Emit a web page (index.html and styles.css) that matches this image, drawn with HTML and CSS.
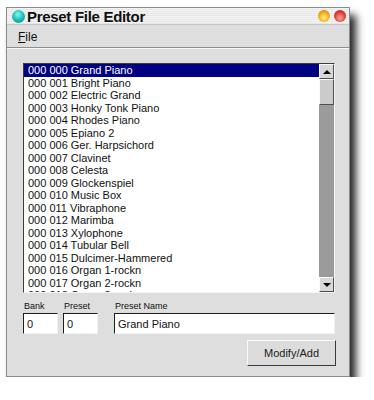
FILE: index.html
```html
<!DOCTYPE html>
<html lang="en">
<head>
    <meta charset="UTF-8">
    <meta name="viewport" content="width=device-width, initial-scale=1.0">
    <title>Preset File Editor</title>
    <link rel="stylesheet" href="styles.css">
</head>
<body>
    <div class="window">
        <!-- Title bar -->
        <div class="titlebar">
            <span class="dot teal"></span>
            <span class="title">Preset File Editor</span>
            <span class="spacer"></span>
            <span class="dot yellow"></span>
            <span class="dot red"></span>
        </div>

        <div class="menubar">
            <span class="menu"><u>F</u>ile</span>
        </div>

        <div class="content">
            <div class="listbox">
                <ul class="list">
                    <li class="selected">000 000 Grand Piano</li>
                    <li>000 001 Bright Piano</li>
                    <li>000 002 Electric Grand</li>
                    <li>000 003 Honky Tonk Piano</li>
                    <li>000 004 Rhodes Piano</li>
                    <li>000 005 Epiano 2</li>
                    <li>000 006 Ger. Harpsichord</li>
                    <li>000 007 Clavinet</li>
                    <li>000 008 Celesta</li>
                    <li>000 009 Glockenspiel</li>
                    <li>000 010 Music Box</li>
                    <li>000 011 Vibraphone</li>
                    <li>000 012 Marimba</li>
                    <li>000 013 Xylophone</li>
                    <li>000 014 Tubular Bell</li>
                    <li>000 015 Dulcimer-Hammered</li>
                    <li>000 016 Organ 1-rockn</li>
                    <li>000 017 Organ 2-rockn</li>
                    <li>000 018 Organ 3-rockn</li>
                </ul>
                <div class="scrollbar">
                    <div class="arrow up"></div>
                    <div class="track"><div class="thumb"></div></div>
                    <div class="arrow down"></div>
                </div>
            </div>

            <div class="fields">
                <label class="field">
                    <span>Bank</span>
                    <input type="text" value="0">
                </label>
                <label class="field">
                    <span>Preset</span>
                    <input type="text" value="0">
                </label>
                <label class="field name">
                    <span>Preset Name</span>
                    <input type="text" value="Grand Piano">
                </label>
            </div>

            <div class="actions">
                <button class="modify-btn">Modify/Add</button>
            </div>
        </div>
    </div>
</body>
</html>
```

FILE: styles.css
```css
/* Preset editor window */
* {
    box-sizing: border-box;
}

body {
    margin: 0;
    background: #fff;
    font-family: 'Liberation Sans', Arial, sans-serif;
    color: #111;
}

.window {
    width: 344px;
    height: 370px;
    margin: 7px 0 0 6px;
    border: 1px solid #8c8c8c;
    background: #dedede;
    display: flex;
    flex-direction: column;
    box-shadow: 6px 8px 8px rgba(0,0,0,0.85);
}

.titlebar {
    height: 17px;
    display: flex;
    align-items: center;
    padding: 0 3px 0 5px;
    background: repeating-linear-gradient(#f4f4f4 0 1px, #e7e7e7 1px 2px);
    border-bottom: 1px solid #c6c6c6;
}

.title {
    font-weight: bold;
    font-size: 15px;
    letter-spacing: -0.3px;
    margin-left: 2px;
    color: #111;
}

.spacer {
    flex: 1;
}

.dot {
    width: 12px;
    height: 12px;
    border-radius: 50%;
}

.dot.teal {
    width: 13px;
    height: 13px;
    background: radial-gradient(circle at 45% 35%, #8ff5ec 0, #1fc4c0 45%, #087a7c 100%);
}

.dot.yellow {
    margin-right: 4px;
    background: radial-gradient(circle at 50% 65%, #ffe98a 0, #f4b21a 50%, #b8760a 100%);
}

.dot.red {
    background: radial-gradient(circle at 50% 65%, #ffb0a8 0, #e8403a 50%, #9c1c18 100%);
}

.menubar {
    height: 23px;
    padding: 2px 11px 0;
    display: flex;
    align-items: center;
    border-bottom: 1px solid #8e8e8e;
    box-shadow: 0 1px 0 #f8f8f8;
}

.menu {
    font-size: 12px;
}

.content {
    flex: 1;
    padding: 15px 14px 0 16px;
}

/* List with scrollbar */
.listbox {
    height: 230px;
    display: flex;
    background: #fff;
    border: 1px solid;
    border-color: #3c3c3c #f4f4f4 #f4f4f4 #3c3c3c;
}

.list {
    flex: 1;
    margin: 0;
    padding: 0;
    list-style: none;
    overflow: hidden;
}

.list li {
    height: 12.5px;
    line-height: 12.5px;
    padding-left: 4px;
    font-size: 11px;
    white-space: nowrap;
}

.list li.selected {
    background: #000080;
    color: #fff;
}

.scrollbar {
    width: 15px;
    display: flex;
    flex-direction: column;
    background: #9b9b9b;
}

.arrow {
    height: 15px;
    background: #d8d8d8;
    border: 1px solid;
    border-color: #fafafa #505050 #505050 #fafafa;
    display: flex;
    align-items: center;
    justify-content: center;
}

.arrow::after {
    content: '';
    border-left: 4px solid transparent;
    border-right: 4px solid transparent;
}

.arrow.up::after {
    border-bottom: 4px solid #000;
}

.arrow.down::after {
    border-top: 4px solid #000;
}

.track {
    flex: 1;
}

.thumb {
    height: 26px;
    background: #cbcbcb;
    border: 1px solid;
    border-color: #fafafa #505050 #505050 #fafafa;
}

/* Bank / preset fields */
.fields {
    display: flex;
    gap: 5px;
    margin-top: 8px;
}

.field {
    display: flex;
    flex-direction: column;
    width: 35px;
}

.field.name {
    flex: 1;
    margin-left: 11px;
}

.field span {
    font-size: 9px;
    line-height: 11px;
    height: 11px;
    padding-left: 1px;
}

.field input {
    height: 21px;
    width: 100%;
    margin: 1px 0 0;
    padding: 0 3px;
    font-family: 'Liberation Sans', Arial, sans-serif;
    font-size: 11px;
    color: #111;
    background: #fff;
    border: 1px solid;
    border-color: #1e1e1e #f2f2f2 #f2f2f2 #1e1e1e;
    outline: none;
}

.actions {
    display: flex;
    justify-content: flex-end;
    margin-top: 6px;
    margin-right: -1px;
}

.modify-btn {
    width: 89px;
    height: 26px;
    font-family: 'Liberation Sans', Arial, sans-serif;
    font-size: 11px;
    color: #222;
    background: #dcdcdc;
    border: 1px solid;
    border-color: #fafafa #3a3a3a #3a3a3a #fafafa;
    cursor: pointer;
}
```
